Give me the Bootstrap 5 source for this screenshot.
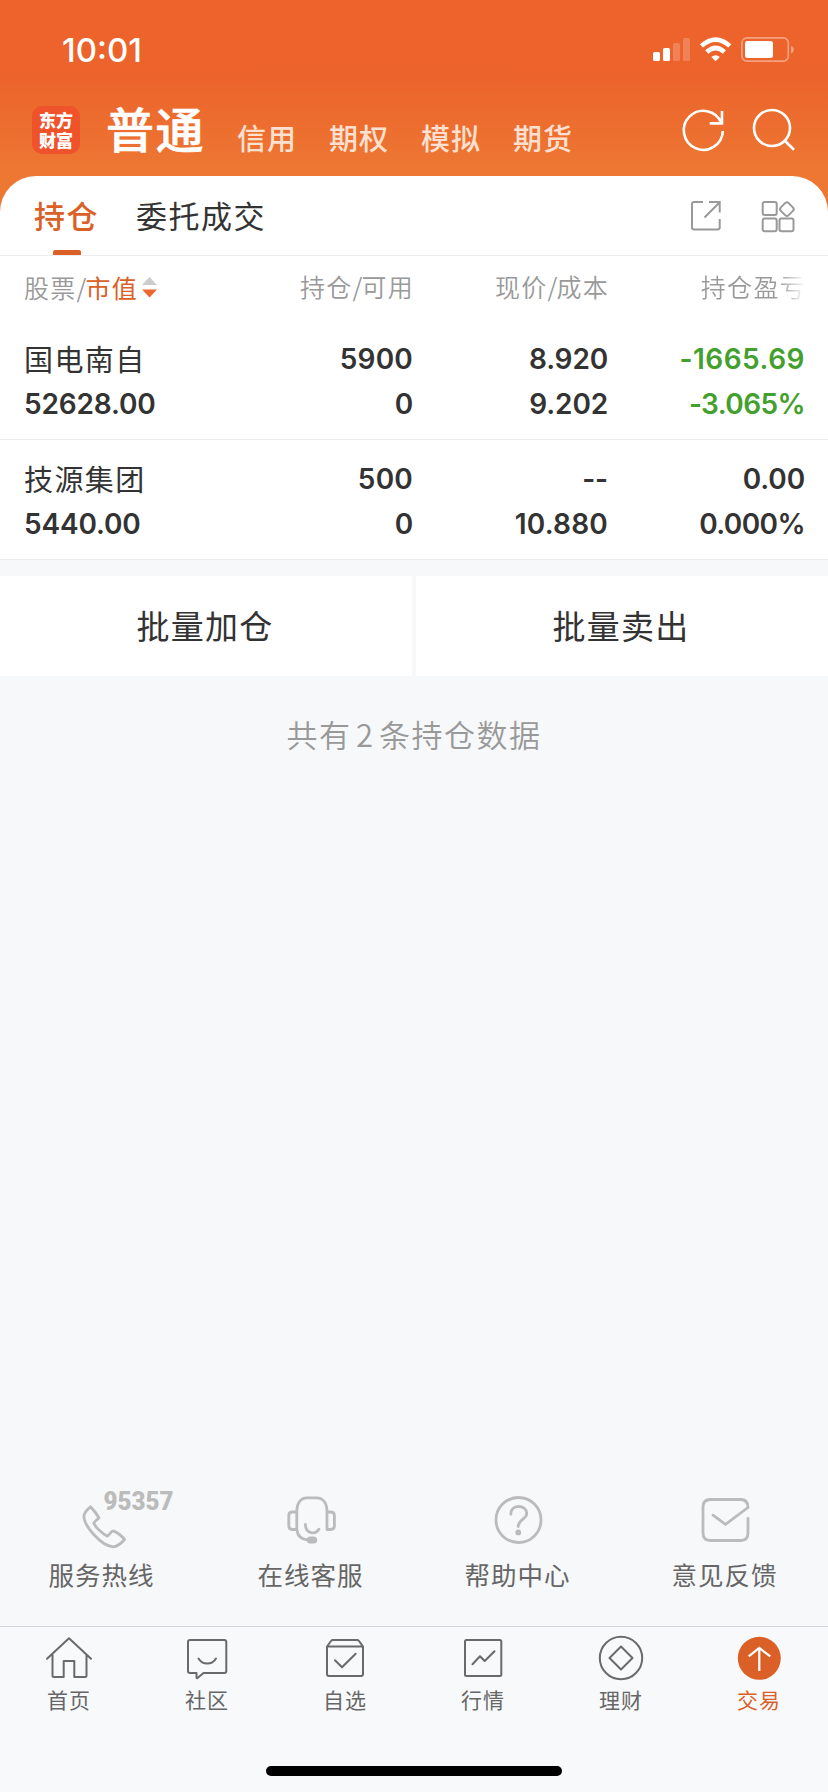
<!DOCTYPE html>
<html lang="zh-CN">
<head>
<meta charset="utf-8">
<meta name="viewport" content="width=device-width, initial-scale=1">
<title>持仓</title>
<link rel="stylesheet" href="https://cdn.jsdelivr.net/npm/bootstrap@5.3.0/dist/css/bootstrap.min.css">
<style>
body{font-family:"Noto Sans CJK SC",sans-serif;background:#f7f8fa;color:#333;width:828px;height:1792px;overflow:hidden;letter-spacing:1px}
svg{display:block;fill:none;flex:none;overflow:visible}
.num{font-family:Inter,sans-serif;font-weight:600;font-size:28px;letter-spacing:-.15px}
.hero{height:216px;background:linear-gradient(#ed632b 0,#ec632b 75px,#ed7733 170px,#ed7733 100%)}
.clock{font:500 33px/32px Inter,sans-serif;letter-spacing:0;padding:34px 0 0 62px}
.sys{margin:36px 33px 0 0}
.head-nav{height:72px;padding:0 33px 0 32px;margin-top:26px}
.logo{width:48px;height:48px;border-radius:10px;background:#ef532b;color:#fff;font-weight:900;font-size:17px;line-height:20px;letter-spacing:0}
.account-on{font-size:48px;font-weight:500;line-height:60px;letter-spacing:1.5px;color:#fff;margin:-6px 32px 0 26px;-webkit-text-stroke:.6px #fff}
.account{font-size:29px;line-height:40px;font-weight:500;color:#fde0d0}
.sheet{margin-top:-40px;height:384px;border-radius:36px 36px 0 0}
.tabs{height:80px;border-bottom:1px solid #ededed;padding:0 33px 0 34px;font-size:31px;letter-spacing:1.5px;line-height:77px}
.tab-on{color:#db6027;font-weight:500}
.tab-on::after{content:"";position:absolute;left:19px;bottom:0;width:28px;height:5px;border-radius:2px 2px 0 0;background:#db6027}
.grid4{display:grid;grid-template-columns:200px 189px 195px 197px;padding:0 23px 0 24px}
.grid4>*{text-align:right}
.grid4>:first-child{text-align:left}
.cols{height:64px;line-height:60px;font-size:25px;color:#999;font-weight:350;letter-spacing:1.3px}
.cols>div{margin-right:-1px}
.cols i{font-style:normal;letter-spacing:-1px}
.fade-end{background:linear-gradient(90deg,#999 74%,#fff 100%);-webkit-background-clip:text;color:transparent}
.hold{height:120px;border-bottom:1px solid #ededed;padding-top:17px}
.hold .line{height:45px;line-height:45px}
.wide{letter-spacing:.2px}
.wider{letter-spacing:.5px}
.pct{letter-spacing:-.6px}
.stock{font-size:29px;letter-spacing:1.4px;line-height:43px;height:45px;font-family:"Noto Sans CJK SC",sans-serif;font-weight:400}
.fall{color:#43a02c}
.bulk{height:100px;margin-top:16px;gap:4px}
.bulk>button{border:0;background:#fff;color:#333;font-size:33px;letter-spacing:1.3px;font-weight:400;padding:0 2px 1px 0}
.total{color:#999;font-size:31px;line-height:40px;margin-top:38px;letter-spacing:1.5px;font-weight:350;word-spacing:-4px}
.service{height:140px;font-size:25.5px;color:#666}
.service .label{line-height:34px;margin-top:5px}
.service svg{stroke:#bbb;stroke-width:2.8;stroke-linecap:round;stroke-linejoin:round}
.bottom{height:166px;border-top:1px solid #d3d4d7;background:#f8f9fb;font-size:21px;color:#666;padding-top:7px}
.bottom .label{line-height:28px;margin-top:3px}
.bottom svg{stroke:#6a6a6a;stroke-width:2;stroke-linejoin:round;stroke-linecap:round}
.indicator{width:296px;height:10px;border-radius:5px;background:#000;margin-bottom:16px}
</style>
</head>
<body class="d-flex flex-column">
<header class="hero flex-shrink-0">
  <div class="d-flex justify-content-between" style="height:68px">
    <div class="clock text-white">10:01</div>
    <svg class="sys" width="142" height="28" viewBox="653 36 142 28">
      <g fill="#fff"><rect x="653" y="52" width="7" height="9" rx="1.6"/><rect x="663" y="48" width="7" height="13" rx="1.6"/>
      <g opacity=".2"><rect x="673" y="43" width="7" height="18" rx="1.6"/><rect x="683" y="38" width="7" height="23" rx="1.6"/></g>
      <path d="M711.3 57Q715.6 53.400 719.900 57L715.600 61.200Z"/><rect x="745" y="41" width="28" height="17" rx="2.5"/></g>
      <g stroke="#fff" stroke-width="4.6"><path d="M701.400 45.900Q715.600 33.200 729.800 45.900"/><path d="M706.800 52Q715.600 44 724.400 52"/></g>
      <rect x="741.9" y="37.9" width="46.4" height="23.2" rx="5" stroke="#fff" stroke-width="1.7" opacity=".4"/><path fill="#fff" opacity=".4" d="M791 45.5Q794 47 794 49.5T791 53.5Z"/>
    </svg>
  </div>
  <nav class="head-nav d-flex align-items-center">
    <div class="logo text-center pt-1">东方<br>财富</div>
    <div class="account-on">普通</div>
    <div class="d-flex" style="gap:32px;padding-top:13px"><span class="account">信用</span><span class="account">期权</span><span class="account">模拟</span><span class="account">期货</span></div>
    <svg class="ms-auto" width="112" height="44" viewBox="682 108 112 44" stroke="#fff" stroke-width="2.6"><path d="M721.8 131A19.5 19.5 0 1 1 720.3 122.8M721 111V123.4H708.7"/><circle cx="771" cy="128" r="18"/><path d="M783.5 140.5 793 149.7"/></svg>
  </nav>
</header>
<main class="flex-grow-1 d-flex flex-column">
  <section class="sheet bg-white flex-shrink-0">
    <div class="tabs d-flex">
      <div class="tab-on position-relative">持仓</div><div style="margin-left:37px">委托成交</div>
      <svg class="ms-auto" style="margin-top:24px" width="105" height="33" viewBox="690 200 105 33" stroke="#999" stroke-width="2"><path d="M703 202H694Q692 202 692 204V227.5Q692 229.500 694 229.500H717.500Q719.700 229.500 719.700 227.500V219M704.500 217.500 719.200 202.800M709 202H719.700V212.500"/><rect x="762.7" y="202" width="14" height="13" rx="2"/><rect x="762.7" y="218.500" width="14" height="12.800" rx="2"/><rect x="779.500" y="218.500" width="14" height="12.800" rx="2"/><rect x="781.400" y="203.600" width="11" height="11" rx="2.500" transform="rotate(45 786.900 209.100)"/></svg>
    </div>
    <div class="cols grid4">
      <div class="d-flex" style="align-items:center;height:62px"><span>股票<i>/</i><span style="color:#db6027;font-weight:400">市值</span></span><svg class="ms-1" width="15" height="21" viewBox="0 0 15 21"><path fill="#ccc" d="M7.500 0 15 8H0Z"/><path fill="#eb6930" d="M0 12.500H15L7.500 20.500Z"/></svg></div>
      <div>持仓<i>/</i>可用</div><div>现价<i>/</i>成本</div><div><span class="fade-end">持仓盈亏</span></div>
    </div>
    <div class="hold grid4 num">
      <div><div class="stock">国电南自</div><div class="line">52628.00</div></div>
      <div><div class="line wide">5900</div><div class="line">0</div></div>
      <div><div class="line">8.920</div><div class="line">9.202</div></div>
      <div class="fall"><div class="line wider">-1665.69</div><div class="line pct">-3.065%</div></div>
    </div>
    <div class="hold grid4 num">
      <div><div class="stock">技源集团</div><div class="line">5440.00</div></div>
      <div><div class="line wide">500</div><div class="line">0</div></div>
      <div><div class="line">--</div><div class="line wide">10.880</div></div>
      <div><div class="line">0.00</div><div class="line pct">0.000%</div></div>
    </div>
  </section>
  <div class="bulk d-flex flex-shrink-0"><button class="flex-fill">批量加仓</button><button class="flex-fill">批量卖出</button></div>
  <p class="total text-center mb-0">共有 2 条持仓数据</p>
  <div class="service row g-0 mt-auto text-center">
    <div class="col d-flex flex-column align-items-center"><svg width="140" height="66" viewBox="0 0 140 66"><path d="M57.500 20.800C60.500 24 63.500 27.500 65.900 31.700 64.800 33.500 61.300 35.200 60.800 37.200 62.500 41.500 70 48.200 74.300 50.200 76.500 49 78 45 80.300 44.900 84.500 46.500 88.500 49.800 91.500 53.500 88.500 57 85 60.500 80.200 60.800 68 60 51 39.500 50.900 30.500 51 26.500 54 23.500 57.500 20.800Z" transform="translate(-1 0)"/><text x="69.500" y="24" textLength="70" lengthAdjust="spacingAndGlyphs" font-family="Roboto" font-weight="900" font-size="25" fill="#bbb" stroke="none" letter-spacing="0">95357</text></svg><div class="label pe-1">服务热线</div></div>
    <div class="col d-flex flex-column align-items-center"><svg width="140" height="66" viewBox="0 0 140 66"><path d="M55.800 26V43.500H51.500Q47.800 43.500 47.800 40V29.500Q47.800 26 51.500 26H55.800C55.500 17 60 11.800 66 11.800H75.500C82 11.800 86 17 86 26H89.500Q93.400 26 93.400 29.500V40Q93.400 43.500 89.500 43.500H86V26M55.800 43.500C56.500 50 60 53.500 67 54M64.400 38.500C64.500 48 74.500 49 77.900 43.300"/><rect x="67.200" y="51.800" width="7.600" height="4.400" rx="2.200" fill="#bbb"/></svg><div class="label">在线客服</div></div>
    <div class="col d-flex flex-column align-items-center"><svg width="140" height="66" viewBox="0 0 140 66"><circle cx="70.500" cy="34" r="22.500"/><path d="M62.800 28.300C62.600 23.500 66 20.300 70.500 20.300S78.800 23.300 78.800 27.500C78.800 33 70.200 33.500 70.200 40.500"/><circle cx="70.300" cy="46.400" r="1.500" fill="#bbb"/></svg><div class="label">帮助中心</div></div>
    <div class="col d-flex flex-column align-items-center"><svg width="140" height="66" viewBox="0 0 140 66"><path d="M93 32.500V47Q93 54.500 85.500 54.500H55.500Q48 54.500 48 47V21Q48 13.500 55.500 13.500H85.500Q93 13.500 93 21.500L70.500 38.300 58 29.200"/></svg><div class="label">意见反馈</div></div>
  </div>
</main>
<footer class="bottom flex-shrink-0 d-flex flex-column">
  <nav class="row g-0 text-center">
    <div class="col d-flex flex-column align-items-center"><svg width="48" height="48"><path d="M2 24.700 24 4.300 46 24.700M7.500 20.500V41.500Q7.500 43 9 43H18.700V27H29.300V43H40Q41.500 43 41.500 41.500V20.500"/></svg><div class="label">首页</div></div>
    <div class="col d-flex flex-column align-items-center"><svg width="48" height="48"><path d="M13.500 39H7Q5 39 5 37V8Q5 6 7 6H41.300Q43.300 6 43.300 8V37Q43.300 39 41.300 39H20.500L14.500 44Q13.500 44.500 13.500 43ZM15.500 24.500C19.500 31.200 29 31.200 33 24.500"/></svg><div class="label">社区</div></div>
    <div class="col d-flex flex-column align-items-center"><svg width="48" height="48"><path d="M6 12.500V40Q6 42 8 42H40Q42 42 42 40V12.500ZM6 12.500 10 7Q10.700 6 12 6H36Q37.300 6 38 7L42 12.500M14 26.300 21 33.300 34.700 19.700"/></svg><div class="label">自选</div></div>
    <div class="col d-flex flex-column align-items-center"><svg width="48" height="48"><rect x="6" y="6" width="36.300" height="36" rx="1.500"/><path d="M13.500 30.300 21 22.200 25.700 27 35.500 17.300"/></svg><div class="label">行情</div></div>
    <div class="col d-flex flex-column align-items-center"><svg width="48" height="48"><circle cx="24" cy="24" r="21.200"/><path d="M24 12.500 35.500 24 24 35.500 12.500 24Z"/></svg><div class="label">理财</div></div>
    <div class="col d-flex flex-column align-items-center" style="color:#db6027"><svg width="48" height="48"><circle cx="24.300" cy="24.300" r="21.500" fill="#db6027" stroke="none"/><path stroke="#fff" stroke-width="2.200" stroke-linecap="butt" stroke-linejoin="miter" d="M24.300 14V37M13.700 22.400 24.300 14 35.300 22.400"/></svg><div class="label">交易</div></div>
  </nav>
  <div class="indicator mt-auto mx-auto"></div>
</footer>
<script src="https://cdn.jsdelivr.net/npm/bootstrap@5.3.0/dist/js/bootstrap.bundle.min.js"></script>
</body>
</html>
